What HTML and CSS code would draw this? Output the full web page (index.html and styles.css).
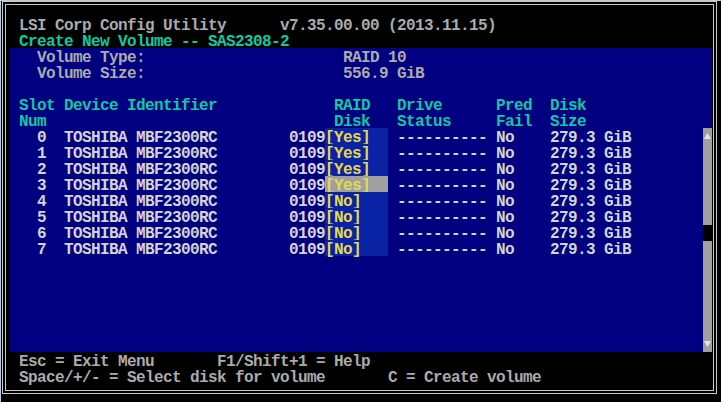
FILE: index.html
```html
<!DOCTYPE html>
<html>
<head>
<meta charset="utf-8">
<title>LSI Corp Config Utility</title>
<link rel="stylesheet" href="styles.css">
</head>
<body>
<div class="frame">
<div class="inner">
<header class="top">
<div class="ln gray"> LSI Corp Config Utility      v7.35.00.00 (2013.11.15)</div>
<div class="ln green"> Create New Volume -- SAS2308-2</div>
</header>
<main class="panel">
<div class="list">
<div class="ln gray">   Volume Type:                      RAID 10</div>
<div class="ln gray">   Volume Size:                      556.9 GiB</div>
<div class="ln"></div>
<div class="ln green"> Slot Device Identifier             RAID   Drive      Pred  Disk</div>
<div class="ln green"> Num                                Disk   Status     Fail  Size</div>
<div class="ln white">   0  TOSHIBA MBF2300RC        0109<span class="sel">[Yes]  </span> ---------- No    279.3 GiB</div>
<div class="ln white">   1  TOSHIBA MBF2300RC        0109<span class="sel">[Yes]  </span> ---------- No    279.3 GiB</div>
<div class="ln white">   2  TOSHIBA MBF2300RC        0109<span class="sel">[Yes]  </span> ---------- No    279.3 GiB</div>
<div class="ln white">   3  TOSHIBA MBF2300RC        0109<span class="sel cur">[Yes]  </span> ---------- No    279.3 GiB</div>
<div class="ln white">   4  TOSHIBA MBF2300RC        0109<span class="sel">[No]   </span> ---------- No    279.3 GiB</div>
<div class="ln white">   5  TOSHIBA MBF2300RC        0109<span class="sel">[No]   </span> ---------- No    279.3 GiB</div>
<div class="ln white">   6  TOSHIBA MBF2300RC        0109<span class="sel">[No]   </span> ---------- No    279.3 GiB</div>
<div class="ln white">   7  TOSHIBA MBF2300RC        0109<span class="sel">[No]   </span> ---------- No    279.3 GiB</div>
</div>
<div class="scroll">
<div class="arrow"><svg width="9" height="16" viewBox="0 0 9 16"><path d="M1 11 L4.5 5 L8 11 Z" fill="#e4e4e4"/></svg></div>
<div class="track upper"></div>
<div class="thumb"></div>
<div class="track lower"></div>
<div class="arrow"><svg width="9" height="16" viewBox="0 0 9 16"><path d="M1 5 L8 5 L4.5 11 Z" fill="#e4e4e4"/></svg></div>
</div>
</main>
<footer class="bottom">
<div class="ln gray"> Esc = Exit Menu       F1/Shift+1 = Help</div>
<div class="ln gray"> Space/+/- = Select disk for volume       C = Create volume</div>
</footer>
</div>
</div>
</body>
</html>
```
FILE: styles.css
```css
html {
  background: #000;
}
body {
  margin: 0;
  background: #000;
  border-top: 1px solid #b8cce0;
  border-left: 1px solid #b8cce0;
  width: 720px;
  height: 401px;
  overflow: hidden;
  font-family: "Liberation Mono", "DejaVu Sans Mono", monospace;
  font-size: 16px;
  letter-spacing: -0.6px;
  font-weight: bold;
}
.frame {
  margin: 0 0 0 1px;
  width: 715px;
  height: 393px;
  box-sizing: border-box;
  border: 1px solid #c8c8c8;
  padding: 2px;
}
.inner {
  height: 100%;
  box-sizing: border-box;
  border: 1px solid #c8c8c8;
  display: flex;
  flex-direction: column;
}
.top {
  padding: 11px 0 0 4px;
}
.bottom {
  padding-left: 4px;
}
.ln {
  height: 16px;
  box-sizing: border-box;
  padding-top: 4px;
  line-height: 12px;
  white-space: pre;
}
.gray { color: #ababab; }
.white { color: #d4d4d4; }
.green { color: #12c8a2; }
.panel {
  display: flex;
  height: 304px;
  margin: 0 1px 0 4px;
  background: #000080;
}
.list {
  flex: 1;
}
.sel {
  display: inline-block;
  box-sizing: border-box;
  height: 16px;
  margin-top: -4px;
  padding-top: 4px;
  vertical-align: top;
  background: #0a22a4;
  color: #e2dc4c;
}
.sel.cur {
  background: #a0a0a0;
}
.scroll {
  width: 9px;
  flex: none;
  margin-top: 80px;
  height: 224px;
  display: flex;
  flex-direction: column;
  background: #a0a0a0;
}
.arrow {
  height: 16px;
}
.arrow svg {
  display: block;
}
.track.upper {
  height: 81px;
}
.thumb {
  height: 16px;
  background: #000;
}
.track.lower {
  flex: 1;
}
```
